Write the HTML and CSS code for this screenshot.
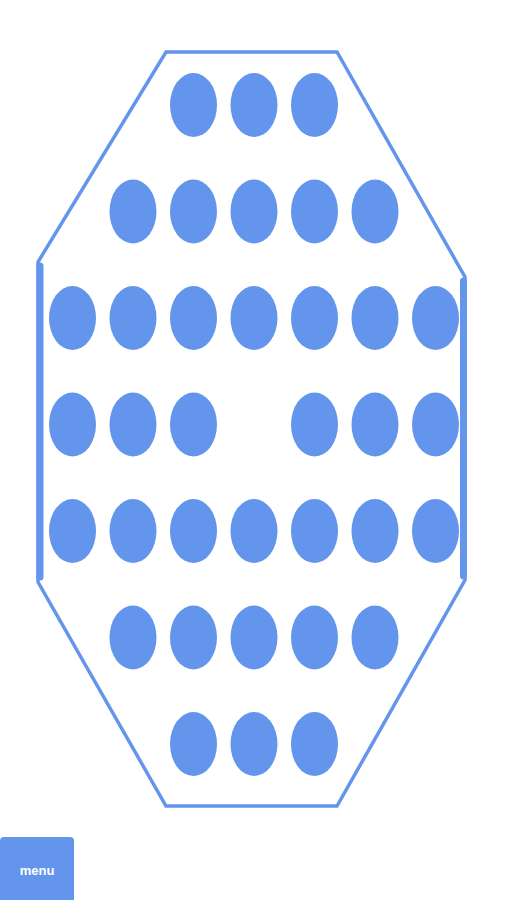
FILE: index.html
```html
<!DOCTYPE html>
<html>
<head>
<meta charset="utf-8">
<link rel="stylesheet" href="styles.css">
</head>
<body>
<main class="page">
  <svg class="board" width="507" height="837" viewBox="0 0 507 837" xmlns="http://www.w3.org/2000/svg">
    <polygon class="frame" points="166,52 337,52 465,277 465,580 337,806 166,806 38,582 38,262"/>
    <line class="bar" x1="40" y1="266" x2="40" y2="577"/>
    <line class="bar" x1="463.5" y1="281" x2="463.5" y2="576"/>
    <g class="pegs">
      <ellipse cx="193.5" cy="105" rx="23.5" ry="32"/>
      <ellipse cx="254" cy="105" rx="23.5" ry="32"/>
      <ellipse cx="314.5" cy="105" rx="23.5" ry="32"/>

      <ellipse cx="133" cy="211.5" rx="23.5" ry="32"/>
      <ellipse cx="193.5" cy="211.5" rx="23.5" ry="32"/>
      <ellipse cx="254" cy="211.5" rx="23.5" ry="32"/>
      <ellipse cx="314.5" cy="211.5" rx="23.5" ry="32"/>
      <ellipse cx="375" cy="211.5" rx="23.5" ry="32"/>

      <ellipse cx="72.5" cy="318" rx="23.5" ry="32"/>
      <ellipse cx="133" cy="318" rx="23.5" ry="32"/>
      <ellipse cx="193.5" cy="318" rx="23.5" ry="32"/>
      <ellipse cx="254" cy="318" rx="23.5" ry="32"/>
      <ellipse cx="314.5" cy="318" rx="23.5" ry="32"/>
      <ellipse cx="375" cy="318" rx="23.5" ry="32"/>
      <ellipse cx="435.5" cy="318" rx="23.5" ry="32"/>

      <ellipse cx="72.5" cy="424.5" rx="23.5" ry="32"/>
      <ellipse cx="133" cy="424.5" rx="23.5" ry="32"/>
      <ellipse cx="193.5" cy="424.5" rx="23.5" ry="32"/>
      <ellipse cx="314.5" cy="424.5" rx="23.5" ry="32"/>
      <ellipse cx="375" cy="424.5" rx="23.5" ry="32"/>
      <ellipse cx="435.5" cy="424.5" rx="23.5" ry="32"/>

      <ellipse cx="72.5" cy="531" rx="23.5" ry="32"/>
      <ellipse cx="133" cy="531" rx="23.5" ry="32"/>
      <ellipse cx="193.5" cy="531" rx="23.5" ry="32"/>
      <ellipse cx="254" cy="531" rx="23.5" ry="32"/>
      <ellipse cx="314.5" cy="531" rx="23.5" ry="32"/>
      <ellipse cx="375" cy="531" rx="23.5" ry="32"/>
      <ellipse cx="435.5" cy="531" rx="23.5" ry="32"/>

      <ellipse cx="133" cy="637.5" rx="23.5" ry="32"/>
      <ellipse cx="193.5" cy="637.5" rx="23.5" ry="32"/>
      <ellipse cx="254" cy="637.5" rx="23.5" ry="32"/>
      <ellipse cx="314.5" cy="637.5" rx="23.5" ry="32"/>
      <ellipse cx="375" cy="637.5" rx="23.5" ry="32"/>

      <ellipse cx="193.5" cy="744" rx="23.5" ry="32"/>
      <ellipse cx="254" cy="744" rx="23.5" ry="32"/>
      <ellipse cx="314.5" cy="744" rx="23.5" ry="32"/>
    </g>
  </svg>
  <button class="menu-btn" type="button">menu</button>
</main>
</body>
</html>
```

FILE: styles.css
```css
html, body {
  margin: 0;
  padding: 0;
  background: #ffffff;
}

.page {
  width: 507px;
  height: 900px;
  overflow: hidden;
  display: flex;
  flex-direction: column;
}

.board {
  display: block;
  flex: none;
}

.frame {
  fill: none;
  stroke: #6495ed;
  stroke-width: 3.5;
  stroke-linejoin: miter;
}

.bar {
  stroke: #6495ed;
  stroke-width: 7;
  stroke-linecap: round;
}

.pegs ellipse {
  fill: #6495ed;
}

.menu-btn {
  flex: none;
  width: 74px;
  height: 70px;
  margin: 0;
  padding: 0 0 3px 0;
  border: none;
  border-radius: 4px;
  background: #6495ed;
  color: #ffffff;
  font-family: "Liberation Sans", Arial, sans-serif;
  font-weight: bold;
  font-size: 13px;
  line-height: 1;
  text-align: center;
  align-self: flex-start;
}
```
